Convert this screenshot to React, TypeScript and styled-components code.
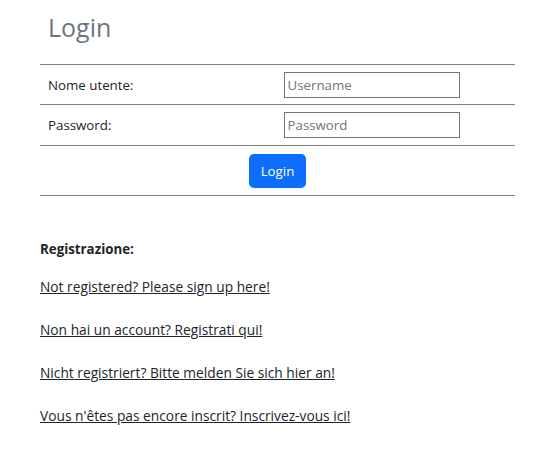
import * as React from 'react';
import styled, { createGlobalStyle } from 'styled-components';

const Global = createGlobalStyle`
  body {
    margin: 0;
    background: #ffffff;
    font-family: "Open Sans", "Noto Sans", sans-serif;
    font-size: 13.3px;
    color: #212529;
  }
`;

const Page = styled.div`
  padding: 0 40px;
  width: 475px;
`;

const Title = styled.h1`
  margin: 0;
  padding: 10px 8px 0;
  height: 64px;
  box-sizing: border-box;
  font-size: 25px;
  font-weight: 500;
  color: #6c757d;
`;

const Table = styled.table`
  width: 100%;
  border-collapse: collapse;
  border-top: 1px solid #808080;
`;

const Row = styled.tr<{ $h: number }>`
  height: ${(p) => p.$h}px;
  border-bottom: 1px solid #808080;
`;

const Cell = styled.td<{ $center?: boolean }>`
  width: 50%;
  padding: 0 8px;
  vertical-align: middle;
  text-align: ${(p) => (p.$center ? 'center' : 'left')};
`;

const InputCell = styled(Cell)`
  padding-left: 6px;
`;

const Input = styled.input`
  box-sizing: border-box;
  width: 176px;
  height: 26px;
  border: 1px solid #767676;
  border-radius: 0;
  padding: 0 3px;
  font-family: inherit;
  font-size: 13.3px;
  color: #212529;
  &::placeholder {
    color: #757575;
  }
`;

const Button = styled.button`
  height: 34px;
  padding: 0 12px;
  border: none;
  border-radius: 5px;
  background: #0d6efd;
  color: #ffffff;
  font-family: inherit;
  font-size: 13.3px;
`;

const Section = styled.div`
  padding-top: 44px;
  display: flex;
  flex-direction: column;
  gap: 24px;
`;

const Heading = styled.div`
  font-weight: 700;
  margin-bottom: -5px;
`;

const Link = styled.a`
  color: #212529;
  font-size: 13.75px;
  text-decoration: underline;
`;

export default function App() {
  return (
    <Page>
      <Global />
      <Title>Login</Title>
      <Table>
        <tbody>
          <Row $h={40}>
            <Cell>Nome utente:</Cell>
            <InputCell>
              <Input placeholder="Username" />
            </InputCell>
          </Row>
          <Row $h={41}>
            <Cell>Password:</Cell>
            <InputCell>
              <Input type="password" placeholder="Password" />
            </InputCell>
          </Row>
          <Row $h={50}>
            <Cell colSpan={2} $center>
              <Button>Login</Button>
            </Cell>
          </Row>
        </tbody>
      </Table>
      <Section>
        <Heading>Registrazione:</Heading>
        <Link href="#">Not registered? Please sign up here!</Link>
        <Link href="#">Non hai un account? Registrati qui!</Link>
        <Link href="#">Nicht registriert? Bitte melden Sie sich hier an!</Link>
        <Link href="#">Vous n'êtes pas encore inscrit? Inscrivez-vous ici!</Link>
      </Section>
    </Page>
  );
}
